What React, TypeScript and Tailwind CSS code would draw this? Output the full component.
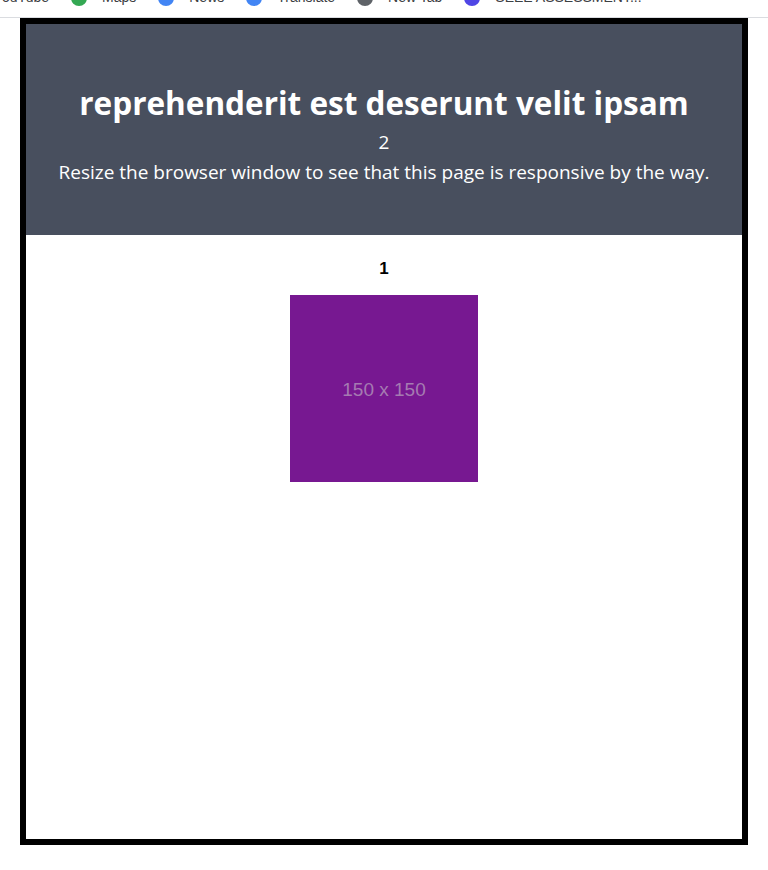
const bookmarks = [
  { label: 'YouTube', color: '#ea4335' },
  { label: 'Maps', color: '#34a853' },
  { label: 'News', color: '#4285f4' },
  { label: 'Translate', color: '#4285f4' },
  { label: 'New Tab', color: '#5f6368' },
  { label: 'SEEE ASSESSMENT...', color: '#4f46e5' },
];

const BookmarkBar = () => (
  <div className="h-[18px] overflow-hidden border-b border-[#dadce0] bg-white">
    <div className="flex items-center gap-[22px] -mt-[13px] -ml-[6px] text-[14px] text-[#3c4043] font-['Liberation_Sans',sans-serif]">
      {bookmarks.map((b, i) => (
        <div key={b.label} className="flex items-center gap-[15px]">
          {i > 0 && <span className="w-[16px] h-[16px] rounded-full" style={{ backgroundColor: b.color }} />}
          <span>{b.label}</span>
        </div>
      ))}
    </div>
  </div>
);

export default function App() {
  return (
    <div className="min-h-[870px] bg-white">
      <BookmarkBar />
      <div className="mx-[20px] w-[728px] h-[827px] border-[6px] border-black">
        <header className="h-[211px] bg-[#484f5e] text-white text-center flex flex-col items-center pt-[59px] font-['Open_Sans',sans-serif]">
          <h1 className="text-[31.5px] font-bold leading-[40px]">reprehenderit est deserunt velit ipsam</h1>
          <p className="text-[19px] leading-[26px] mt-[6px]">2</p>
          <p className="text-[19px] leading-[26px] mt-[4px]">Resize the browser window to see that this page is responsive by the way.</p>
        </header>
        <section className="flex flex-col items-center pt-[23px] font-['Liberation_Sans',sans-serif]">
          <h2 className="text-[17px] font-bold leading-[22px] text-black">1</h2>
          <div className="mt-[15px] w-[188px] h-[187px] bg-[#771891] flex items-center justify-center pt-[4px]">
            <span className="text-[19px] text-[#a57bb1]">150 x 150</span>
          </div>
        </section>
      </div>
    </div>
  );
}
